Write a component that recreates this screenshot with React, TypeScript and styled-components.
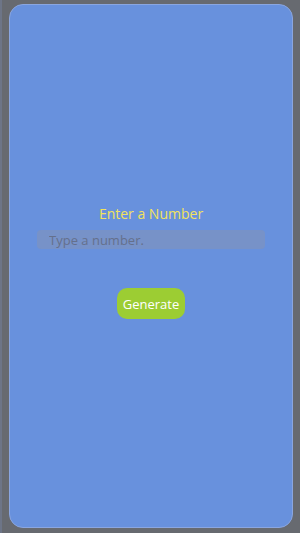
import styled, { createGlobalStyle } from "styled-components";

const GlobalStyle = createGlobalStyle`
  html, body {
    margin: 0;
    padding: 0;
    background: #676a70;
  }
  body {
    font-family: "Open Sans", "Noto Sans", sans-serif;
  }
`;

const Frame = styled.div`
  width: 300px;
  height: 533px;
  box-sizing: border-box;
  padding: 4px 7px 5px 7px;
  background: #676a70;
  border-left: 2px solid #6d7587;
`;

const Screen = styled.div`
  height: 100%;
  box-sizing: border-box;
  background: #6891dd;
  border-radius: 14px;
  border: 1px solid #8aa6e0;
  display: flex;
  flex-direction: column;
  align-items: center;
  padding-top: 199px;
`;

const Title = styled.h1`
  margin: 0;
  font-size: 14px;
  font-weight: 400;
  color: #f2e35c;
  line-height: 20px;
`;

const NumberInput = styled.input`
  margin-top: 6px;
  width: 228px;
  height: 19px;
  box-sizing: border-box;
  border: none;
  outline: none;
  border-radius: 4px;
  background: #7792c8;
  padding: 0 12px;
  font-family: inherit;
  font-size: 13px;
  color: #333;
  &::placeholder {
    color: #65708c;
  }
`;

const Button = styled.button`
  margin-top: 39px;
  height: 31px;
  padding: 0 6px;
  border: none;
  border-radius: 10px;
  background: #9ccd33;
  color: #ffffff;
  font-family: inherit;
  font-size: 13px;
  cursor: pointer;
`;

export default function App() {
  return (
    <>
      <GlobalStyle />
      <Frame>
        <Screen>
          <Title>Enter a Number</Title>
          <NumberInput placeholder="Type a number." />
          <Button>Generate</Button>
        </Screen>
      </Frame>
    </>
  );
}
